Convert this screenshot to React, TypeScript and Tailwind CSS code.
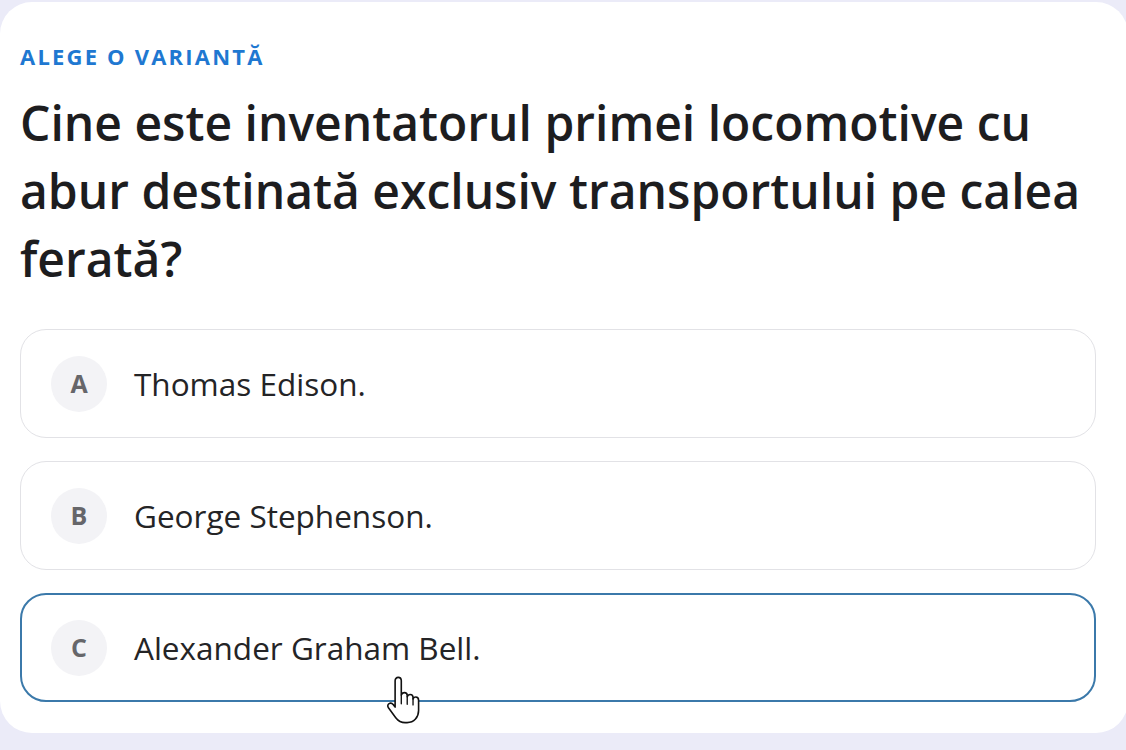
import React from "react";

const options = [
  { letter: "A", text: "Thomas Edison." },
  { letter: "B", text: "George Stephenson." },
  { letter: "C", text: "Alexander Graham Bell." },
];

function HandCursor() {
  return (
    <svg width="42" height="50" viewBox="0 0 34 40" className="pointer-events-none">
      <path
        d="M9 4.5c0-1.7 1.1-2.8 2.5-2.8S14 2.8 14 4.5v11.5c0.4-1.3 1.3-2 2.5-2s2.3 0.9 2.3 2.4v1c0.4-1.2 1.3-1.9 2.4-1.9 1.3 0 2.3 1 2.3 2.5v1.2c0.4-1 1.2-1.6 2.2-1.6 1.4 0 2.3 1.1 2.3 2.7v8.2c0 5.3-3.6 9.8-9.3 9.8h-1.6c-3.4 0-5.6-1.4-7.6-4L3.6 26.3c-0.9-1.3-0.6-2.7 0.5-3.4 1.1-0.7 2.4-0.4 3.3 0.7L9 25.7z"
        fill="#fff"
        stroke="#111"
        strokeWidth="1.3"
        strokeLinejoin="round"
      />
      <path d="M14 16v7M18.8 17.4v6M23.5 19v5" stroke="#111" strokeWidth="1.1" strokeLinecap="round" />
    </svg>
  );
}

export default function App() {
  return (
    <div
      className="w-[1126px] h-[750px] overflow-hidden bg-[#ebebf8] pt-[2px]"
      style={{ fontFamily: '"Open Sans", "Noto Sans", sans-serif' }}
    >
      <div className="w-[1128px] h-[731px] rounded-[32px] bg-white px-[20px] pt-[40px]">
        <div className="text-[22px] font-bold tracking-[2.2px] text-[#1f78d1] leading-[28px]">ALEGE O VARIANTĂ</div>
        <h1 className="mt-[19px] text-[48px] font-semibold leading-[68px] text-[#1d1d1f]">
          Cine este inventatorul primei locomotive cu abur destinată exclusiv transportului pe calea ferată?
        </h1>
        <div className="mt-[36px] w-[1076px] flex flex-col gap-[23px]">
          {options.map((o) => {
            const selected = o.letter === "C";
            return (
              <div
                key={o.letter}
                className={
                  selected
                    ? "relative h-[109px] rounded-[26px] border-2 border-[#3b79aa] flex items-center pl-[29px]"
                    : "relative h-[109px] rounded-[26px] border-[1.5px] border-[#e2e2e6] flex items-center pl-[30px]"
                }
              >
                <div className="w-[56px] h-[56px] rounded-full bg-[#f3f3f6] flex items-center justify-center text-[25px] font-bold text-[#66666a]">
                  {o.letter}
                </div>
                <div className="ml-[27px] text-[31.5px] font-medium text-[#242426]">{o.text}</div>
                {selected && (
                  <div className="absolute left-[362px] top-[80px]">
                    <HandCursor />
                  </div>
                )}
              </div>
            );
          })}
        </div>
      </div>
    </div>
  );
}
